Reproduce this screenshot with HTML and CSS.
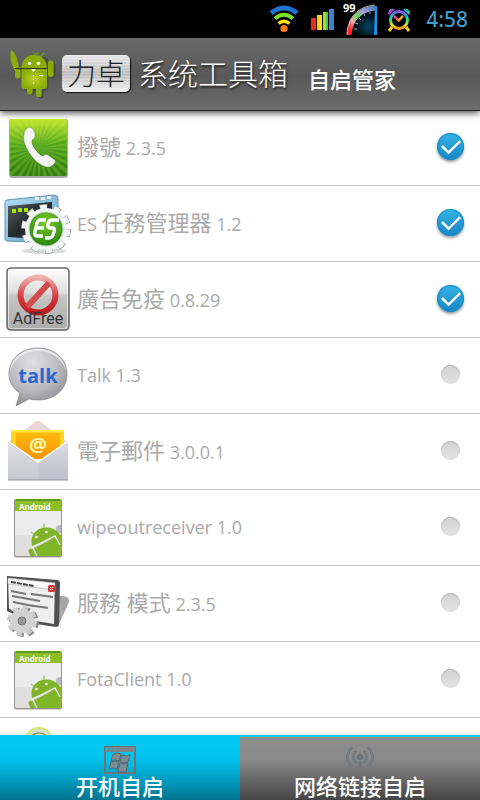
FILE: index.html
```html
<!DOCTYPE html>
<html lang="zh">
<head>
<meta charset="utf-8">
<meta name="viewport" content="width=device-width, initial-scale=1">
<title>自启管家</title>
<link rel="stylesheet" href="styles.css">
</head>
<body>
<svg class="defs" aria-hidden="true">
  <defs>
    <linearGradient id="rainbowY" x1="0" y1="0" x2="0" y2="1"><stop offset="0" stop-color="#85e"/><stop offset=".3" stop-color="#2bc"/><stop offset=".55" stop-color="#3e5"/><stop offset=".8" stop-color="#ed2"/><stop offset="1" stop-color="#e91"/></linearGradient>
    <linearGradient id="bell" x1="0" y1="0" x2="1" y2="0"><stop offset="0" stop-color="#b4c"/><stop offset=".5" stop-color="#48d"/><stop offset="1" stop-color="#2c9"/></linearGradient>
    <linearGradient id="arc" x1="0" y1="1" x2="1" y2="0"><stop offset=".12" stop-color="#f22"/><stop offset=".32" stop-color="#eaa"/><stop offset=".5" stop-color="#6d5"/><stop offset=".7" stop-color="#a9d"/><stop offset="1" stop-color="#48b"/></linearGradient>
    <radialGradient id="dial" cx=".7" cy=".7" r=".6"><stop offset="0" stop-color="#046"/><stop offset="1" stop-color="#000"/></radialGradient>
    <linearGradient id="phoneBg" x1="0" y1="0" x2="0" y2="1"><stop offset="0" stop-color="#c3e92e"/><stop offset=".45" stop-color="#4fa51c"/><stop offset="1" stop-color="#2e7d10"/></linearGradient>
    <radialGradient id="bubble" cx=".4" cy=".25" r=".8"><stop offset="0" stop-color="#e0e0e5"/><stop offset=".6" stop-color="#b8b8bd"/><stop offset="1" stop-color="#88888e"/></radialGradient>
    <radialGradient id="droid"><stop offset="0" stop-color="#bcd22a"/><stop offset="1" stop-color="#8aab08"/></radialGradient>
    <linearGradient id="mail" x1="0" y1="0" x2="0" y2="1"><stop offset="0" stop-color="#dcdce4"/><stop offset="1" stop-color="#bfbfcc"/></linearGradient>
    <linearGradient id="orange" x1="0" y1="0" x2="0" y2="1"><stop offset="0" stop-color="#ffb90c"/><stop offset="1" stop-color="#f79400"/></linearGradient>
    <linearGradient id="adBg" x1="0" y1="0" x2="0" y2="1"><stop offset="0" stop-color="#fff"/><stop offset=".4" stop-color="#ddd"/><stop offset=".45" stop-color="#c6c6c6"/><stop offset="1" stop-color="#aaa"/></linearGradient>
    <linearGradient id="red" x1="0" y1="0" x2="0" y2="1"><stop offset="0" stop-color="#f0b0b0"/><stop offset=".5" stop-color="#d94040"/><stop offset="1" stop-color="#b91c22"/></linearGradient>
    <linearGradient id="glass" x1="0" y1="0" x2="1" y2="1"><stop offset="0" stop-color="#b9e0f4"/><stop offset="1" stop-color="#5a9fc8"/></linearGradient>
    <linearGradient id="screen" x1="0" y1="0" x2="1" y2="1"><stop offset="0" stop-color="#5a6268"/><stop offset=".5" stop-color="#24282a"/><stop offset="1" stop-color="#3c4446"/></linearGradient>
    <radialGradient id="esGreen" cx=".5" cy=".3" r=".7"><stop offset="0" stop-color="#7ccc2c"/><stop offset="1" stop-color="#25850c"/></radialGradient>
    <clipPath id="phoneClip"><rect x="4" y="4" width="57" height="57" rx="2"/></clipPath>
    <clipPath id="cardClip"><rect x="9" y="4" width="46" height="57" rx="2"/></clipPath>
    <symbol id="package" viewBox="0 0 64 64">
      <rect x="8" y="5" width="48" height="58" rx="3" fill="#000" opacity=".18"/>
      <rect x="8" y="4" width="48" height="58" rx="2" fill="#777" opacity=".7"/>
      <g clip-path="url(#cardClip)">
        <path d="M9 4h46v57H9z" fill="#ececec"/>
        <path d="M9 40h46v21H9z" fill="#dedede"/>
        <path d="M9 4h46v12H9z" fill="#8dc026"/><path d="M9 4h46v2H9z" fill="#5c9a18"/>
        <text x="13" y="15" class="package-name">Android</text>
        <circle cx="54" cy="34" r="4" fill="#bbb"/>
        <g fill="#80b52a" stroke-linecap="round">
          <path d="M26 51C24 42 28 35 36 33s15 1 19 8z"/>
          <path d="M28 53 56 39v23H32z"/>
          <path d="M25 56l4 9" stroke="#80b52a" stroke-width="5"/>
          <path d="M25 37l4 3M38 29v5" stroke="#80b52a" stroke-width="1" fill="none"/>
        </g>
        <path d="M25 53 49 41l5 9" fill="none" stroke="#e9e9e9" stroke-width="1.4"/>
        <circle cx="30.500" cy="42" r="1.300" fill="#fff"/><circle cx="40.500" cy="37" r="1.300" fill="#fff"/>
      </g>
    </symbol>
  </defs>
</svg>

<div class="status">
  <svg width="30" height="28" viewBox="0 0 30 28" fill="none" stroke-width="4">
    <path d="M2 8Q15-2 28 8" stroke="#1d6fd0" stroke-width="5"/>
    <path d="M6 13.500Q15 6 24 13.500" stroke="#7be02a"/>
    <path d="M9.500 18.500Q15 14 20.500 18.500" stroke="#ffe31a" stroke-width="3.500"/>
    <circle cx="15" cy="23.500" r="3.600" fill="#ff7a0a"/>
  </svg>
  <svg class="signal" width="24" height="24" viewBox="0 0 24 24">
    <path d="M0 11h5v12H0z" fill="#f32a1a"/><path d="M6 8h5v15H6z" fill="#ffc40a"/><path d="M8 8h3v15H8z" fill="#ffe21a"/><path d="M12 5h5v18h-5z" fill="#a6de22"/><path d="M15 5h2v18h-2z" fill="#46c65a"/><path d="M18 2h5v21h-5z" fill="#3a86c8"/>
  </svg>
  <svg class="gauge" width="36" height="36" viewBox="0 0 36 36">
    <path d="M8 34C8 18 18 9 34 7v27z" fill="url(#dial)"/>
    <path d="M7 34C8 18 17 9 33 7" fill="none" stroke="url(#arc)" stroke-width="5"/>
    <path d="M5 34C6 16 15 6 33 4" fill="none" stroke="#bbb" stroke-width="1"/>
    <path d="M12 28h3M13 22l3 1M17 17l2 2M22 13l1 2M28 11v2" stroke="#9ab" stroke-width="1"/>
    <path d="M33 5h2v29h-3z" fill="#1b94e6"/>
    <text x="1" y="11" class="gauge-value">99</text>
  </svg>
  <svg class="alarm" width="26" height="26" viewBox="0 0 26 26" fill="none">
    <circle cx="13" cy="14" r="8.500" stroke="url(#rainbowY)" stroke-width="3"/>
    <path d="M2 8Q2 2 9 3L3 9zM24 8Q24 2 17 3l6 6z" fill="url(#bell)"/>
    <path d="M6 21l-3 4M20 21l3 4" stroke="#ec3" stroke-width="3"/>
    <path d="M8 10l5 5" stroke="#e5488a" stroke-width="2.500"/><path d="M12 15l5-5" stroke="#f0a020" stroke-width="2.500"/>
  </svg>
  <time class="clock">4:58</time>
</div>

<header class="header">
  <svg class="mascot" width="46" height="50" viewBox="10 10 46 50">
    <g fill="#333" opacity=".45" transform="translate(1.500 1.500)"><rect x="22" y="16" width="25" height="35" rx="5"/><rect x="27" y="45" width="6" height="10" rx="3"/><rect x="36" y="45" width="6" height="13" rx="3"/><rect x="48" y="22" width="6" height="16" rx="3"/></g>
    <g fill="#8aab08">
      <path d="M11 11q5 3 6 9l2 8 3 1-6 3-2-2q-5-9-3-19z"/>
      <rect x="15" y="30" width="5.500" height="9.500" rx="2.700"/>
      <rect x="48" y="21.500" width="5.600" height="16.500" rx="2.800"/>
      <rect x="27" y="44" width="5.600" height="11.500" rx="2.800"/>
      <rect x="36" y="44" width="5.600" height="14" rx="2.800"/>
    </g>
    <path d="M34 17l1-2 4-1M40 18l4-4" fill="none" stroke="#7a9a08" stroke-width="1.500"/>
    <path d="M21.500 29C22 20 27 16 34 16s12.500 4 13 13z" fill="#8aab08"/>
    <path d="M21.500 30H47v17q0 3-3 3H24.500q-3 0-3-3z" fill="url(#droid)"/>
    <path d="M15 29.500h33" stroke="#2c3408" stroke-width="1.200"/>
    <circle cx="29.500" cy="24.500" r="1.700" fill="#fff"/><circle cx="38.500" cy="24.500" r="1.700" fill="#fff"/>
    <path d="M31 30h5l-2.500 3zM39 36h4v1h-4z" fill="#fff"/>
    <path d="M33.500 36v9" stroke="#fff" stroke-dasharray="1.200 2.500" stroke-width="1.200"/>
  </svg>
  <span class="badge">力卓</span>
  <span class="brand">系统工具箱</span>
  <h1 class="title">自启管家</h1>
</header>

<main class="list">
  <label class="row">
    <svg class="icon" viewBox="0 0 64 64">
      <rect x="3" y="4" width="59" height="59" rx="3" fill="#555" opacity=".5"/>
      <g clip-path="url(#phoneClip)">
        <path d="M4 4h57v57H4z" fill="url(#phoneBg)"/>
        <circle cx="32" cy="33" r="22" fill="none" stroke="#d4ef5a" stroke-opacity=".22" stroke-width="44" stroke-dasharray="2.300 2.300"/>
      </g>
      <path d="M23 12q4 0 6 6 1 5-3 7-1 4 3 9 4 6 8 7 2-3 5-1l7 5q2 3-5 7-6 1-13-5-9-8-13-20-2-12 5-15z" fill="#f4f4f4" stroke="#2c6c10" stroke-opacity=".35"/>
    </svg>
    <span class="name"><span class="han">撥號</span> 2.3.5</span>
    <input type="checkbox" class="check" checked>
  </label>
  <label class="row">
    <svg class="icon" viewBox="0 0 64 64">
      <ellipse cx="38" cy="60" rx="22" ry="3" fill="#000" opacity=".15"/>
      <path d="M1 9 48 4q4 0 4 4v44L1 50q-2 0-2-3V12q0-3 2-3z" fill="url(#glass)" stroke="#5c93b4"/>
      <path d="M2 15 46 11v38L2 46z" fill="url(#screen)"/>
      <path d="M29 6h4v3h-4zM35 6h4v3h-4zM41 5h4v3h-4z" fill="#eef"/>
      <path d="M6 18h4v4H6zM12 17h4v4h-4zM18 17h4v4h-4z" fill="#a2e800"/>
      <circle cx="40" cy="38" r="22" fill="none" stroke="#9ba3a6" stroke-width="6" stroke-dasharray="7.520 6.300"/>
      <circle cx="40" cy="38" r="22" fill="none" stroke="#f4f6f6" stroke-width="4.500" stroke-dasharray="6.500 7.320" stroke-dashoffset="-.5"/>
      <circle cx="40" cy="38" r="21" fill="#f1f4f4"/>
      <circle cx="40" cy="38" r="17" fill="url(#esGreen)" stroke="#c4d4c0"/>
      <path d="M40 29H34q-2 0-3 3l-2 9q-1 4 2 4h6M31 37h7M53 29h-7q-3 0-4 4t2 4h3q2 0 1 4l-1 3q-1 3-4 3h-4" fill="none" stroke="#fff" stroke-width="3.300"/>
    </svg>
    <span class="name">ES <span class="han">任務管理器</span> 1.2</span>
    <input type="checkbox" class="check" checked>
  </label>
  <label class="row">
    <svg class="icon" viewBox="0 0 64 64">
      <rect x="1" y="1" width="62" height="62" rx="4" fill="url(#adBg)" stroke="#6c6c6c" stroke-width="1.600"/>
      <rect x="2.500" y="2.500" width="59" height="59" rx="3" fill="none" stroke="#fff" opacity=".6"/>
      <circle cx="32" cy="28" r="17.500" fill="none" stroke="url(#red)" stroke-width="6"/>
      <path d="M21 40 43 16" stroke="#d34a4c" stroke-width="6"/>
      <text x="32" y="57" class="ad-text">AdFree</text>
    </svg>
    <span class="name"><span class="han">廣告免疫</span> 0.8.29</span>
    <input type="checkbox" class="check" checked>
  </label>
  <label class="row">
    <svg class="icon" viewBox="0 0 64 64">
      <path d="M32 5c17 0 29 11 29 26S49 57 32 57q-5 0-9-1L10 63l4-13C7 46 3 39 3 31 3 16 15 5 32 5z" fill="url(#bubble)" stroke="#77777d" stroke-opacity=".6"/>
      <path d="M32 6c15 0 27 9 28 22C56 16 46 8 32 8S8 16 4 28C5 15 17 6 32 6z" fill="#fff" opacity=".6"/>
      <text x="32" y="40" class="talk-text">talk</text>
    </svg>
    <span class="name">Talk 1.3</span>
    <input type="checkbox" class="check">
  </label>
  <label class="row">
    <svg class="icon" viewBox="0 0 64 64">
      <path d="M2 23 28 4q4-4 8 0l26 19z" fill="#e8d5d6"/>
      <path d="M5 11h53v22H5z" fill="#ffd51f"/><path d="M10 14h44v26H10z" fill="url(#orange)"/>
      <path d="M5 11h53v2H5z" fill="#ffe640"/>
      <text x="32" y="33" class="at">@</text>
      <path d="M2 22 32 43l30-21v38q0 1-1 1H3q-1 0-1-1z" fill="url(#mail)"/>
      <path d="M2 22 32 43l30-21" fill="none" stroke="#fff" stroke-width="1.500"/>
      <path d="M32 44v17H3q-1 0-1-1V24z" fill="#fff" opacity=".15"/>
      <path d="M2 61h60" stroke="#8f8f9a"/>
    </svg>
    <span class="name"><span class="han">電子郵件</span> 3.0.0.1</span>
    <input type="checkbox" class="check">
  </label>
  <label class="row">
    <svg class="icon" viewBox="0 0 64 64"><use href="#package"/></svg>
    <span class="name">wipeoutreceiver 1.0</span>
    <input type="checkbox" class="check">
  </label>
  <label class="row">
    <svg class="icon" viewBox="0 0 64 64">
      <path d="M53 25q11-1 10 6l-10 22-8 2z" fill="#777" opacity=".65"/>
      <path d="M1 5 51 9q3 0 3 4l-1 40q0 3-3 3L30 53 1 40z" fill="#4f4f4f"/>
      <path d="M2 7 49 12l-1 41-19-3L3 38z" fill="#eee"/>
      <path d="M2 7 49 12v7L2 13z" fill="#fbfbfb" stroke="#aaa" stroke-width=".6"/>
      <path d="M5 11l23 4" stroke="#444" stroke-width="2" stroke-dasharray="5 1"/>
      <rect x="42" y="14" width="7" height="7" rx="1.500" fill="#d8353a"/><path d="M44 16l3 3m0-3-3 3" stroke="#fff"/>
      <path d="M5 20l15 3M25 23l22 3M6 25l28 5M7 31l20 4M22 34l20 3" stroke="#777" stroke-width="1.800"/>
      <circle cx="18" cy="51" r="12" fill="none" stroke="#8a8a8a" stroke-width="6" stroke-dasharray="5.200 4.225"/>
      <circle cx="16" cy="50" r="12" fill="none" stroke="#ccc" stroke-width="6" stroke-dasharray="5.200 4.225"/>
      <circle cx="16" cy="50" r="8" fill="none" stroke="#d2d2d2" stroke-width="8"/>
      <circle cx="16" cy="50" r="4" fill="#999" stroke="#777"/>
    </svg>
    <span class="name"><span class="han">服務 模式</span> 2.3.5</span>
    <input type="checkbox" class="check">
  </label>
  <label class="row">
    <svg class="icon" viewBox="0 0 64 64"><use href="#package"/></svg>
    <span class="name">FotaClient 1.0</span>
    <input type="checkbox" class="check">
  </label>
  <div class="row">
    <svg class="icon" viewBox="0 0 64 64">
      <circle cx="33" cy="19" r="14" fill="#dcdcd4" stroke="#d3e66c" stroke-width="2"/>
      <circle cx="33" cy="21" r="11" fill="#f4f4f4" stroke="#8a9a50" stroke-width="1.500"/>
    </svg>
  </div>
</main>

<nav class="tabs">
  <button type="button" class="tab tab-active">
    <svg width="32" height="28" viewBox="0 0 32 28">
      <path d="M1 1h30v26H1z" fill="none" stroke="#6c7478" stroke-width="2"/>
      <path d="M1 1h30v5H1z" fill="#7c868a"/>
      <path d="M2 3h2M6 3h2M10 3h2" stroke="#1cb4dc" stroke-width="2"/>
      <g fill="#7f8b90" stroke="#5d666a"><path d="M9 8q4-2 8 0l-2 7q-4-2-8 0zM18 9q4 2 8 0l-2 7q-4 2-8 0zM7 16q4-2 8 0l-2 7q-4-2-8 0zM16 17q4 2 8 0l-2 9h-8z"/></g>
    </svg>
    <span>开机自启</span>
  </button>
  <button type="button" class="tab">
    <svg width="32" height="28" viewBox="0 0 32 28" fill="none" stroke="#66727a" stroke-width="2.500" stroke-linecap="round">
      <circle cx="16" cy="11" r="1.800"/>
      <path d="M16 16v10" stroke="#777"/>
      <path d="M11.500 6q-4 5 0 10M20.500 6q4 5 0 10M7.500 2q-8 9 0 18M24.500 2q8 9 0 18"/>
      <path d="M11.500 6q-4 5 0 10M20.500 6q4 5 0 10M7.500 2q-8 9 0 18M24.500 2q8 9 0 18" stroke="#868b8d" stroke-width="1"/>
    </svg>
    <span>网络链接自启</span>
  </button>
</nav>
</body>
</html>
```
FILE: styles.css
```css
* {
  box-sizing: border-box;
}

body {
  margin: 0;
  height: 100vh;
  display: flex;
  flex-direction: column;
  overflow: hidden;
  background: #fff;
  font-family: "Noto Sans", "Noto Sans CJK SC", sans-serif;
}

.defs {
  position: absolute;
  width: 0;
  height: 0;
}

.status {
  flex: none;
  height: 38px;
  padding: 0 12px;
  display: flex;
  align-items: center;
  justify-content: flex-end;
  background: #000;
}

.signal {
  margin: 0 7px 0 12px;
}

.gauge {
  overflow: visible;
}

.alarm {
  margin: 0 14px 0 8px;
}

.gauge-value {
  font: bold 11px "Noto Sans", sans-serif;
  fill: #fff;
}

.clock {
  font-size: 21px;
  font-weight: 500;
  line-height: 36px;
  color: #409cc8;
}

.header {
  position: relative;
  z-index: 1;
  flex: none;
  height: 72px;
  padding: 0 10px;
  display: flex;
  align-items: baseline;
  white-space: nowrap;
  line-height: 72px;
  color: #fff;
  background: linear-gradient(#6a6a6a, #585858 52%, #6c6c6c);
  box-shadow: 0 1px 0 #222, 0 3px 7px rgba(0, 0, 0, 0.7);
}

.mascot {
  flex: none;
  align-self: center;
  margin-right: 6px;
}

.badge {
  padding: 0 5px;
  border-radius: 5px;
  font-size: 29px;
  font-weight: 300;
  line-height: 37px;
  color: #222;
  background: repeating-linear-gradient(rgba(255, 255, 255, 0.25) 0 1px, transparent 1px 3px), linear-gradient(#e8e8e8, #bcbcbc 50%, #f0f0f0);
  box-shadow: 1px 1px 1px #111;
}

.brand {
  margin-left: 8px;
  font-size: 30px;
  font-weight: 300;
  text-shadow: 1px 2px 2px #222;
}

.title {
  align-self: center;
  margin: 0 0 0 20px;
  padding-top: 10px;
  font-size: 22px;
  font-weight: 500;
  line-height: 32px;
}

.list {
  flex: 1;
  min-height: 0;
  overflow: hidden;
}

.row {
  height: 76px;
  padding: 0 16px 2px 6px;
  display: flex;
  align-items: center;
  gap: 7px;
  border-bottom: 1px solid #c4c4c4;
}

.icon {
  flex: none;
  width: 64px;
  height: 64px;
  overflow: visible;
}

.name {
  flex: 1;
  font-family: "Open Sans", "Noto Sans CJK SC", sans-serif;
  font-size: 18px;
  line-height: 32px;
  color: #aaa;
}

.han {
  font-size: 22px;
}

.check {
  appearance: none;
  flex: none;
  width: 27px;
  height: 27px;
  margin: 0;
  display: grid;
  place-items: center;
  border-radius: 50%;
}

.check::before {
  content: "";
  width: 19px;
  height: 19px;
  border-radius: 50%;
  background: linear-gradient(#d2d2d2, #e2e2e2);
  box-shadow: inset 0 1px 1px #b4b4b4;
}

.check:checked {
  background: linear-gradient(#35b4e6, #1585c4);
  box-shadow: 0 2px 3px rgba(0, 0, 0, 0.4), inset 0 0 1px 1px #1a8cc4;
}

.check:checked::before {
  width: 15px;
  height: 8px;
  margin-bottom: 4px;
  border: solid #fff;
  border-width: 0 0 3px 3px;
  border-radius: 1px;
  background: none;
  box-shadow: none;
  transform: rotate(-45deg);
}

.package-name {
  font: bold 8px "Noto Sans", sans-serif;
  fill: #fff;
}

.ad-text {
  font: 16px Roboto, sans-serif;
  text-anchor: middle;
  fill: #333;
}

.talk-text {
  font: bold 20px "Open Sans", sans-serif;
  text-anchor: middle;
  fill: #2b66d4;
}

.at {
  font: bold 20px "Noto Sans", sans-serif;
  text-anchor: middle;
  fill: #fff6b0;
}

.tabs {
  flex: none;
  height: 65px;
  display: flex;
  border-top: 2px solid #00c8f4;
}

.tab {
  flex: 1;
  padding: 9px 0 0;
  display: flex;
  flex-direction: column;
  align-items: center;
  border: 0;
  font: 500 22px/22px "Noto Sans CJK SC", sans-serif;
  color: #fff;
  background: linear-gradient(#8e8e8e, #8a8a8a 35%, #444);
}

.tab-active {
  background: linear-gradient(#00c8f4, #00c4f0 35%, #007490);
}

.tab svg {
  flex: none;
}
```
